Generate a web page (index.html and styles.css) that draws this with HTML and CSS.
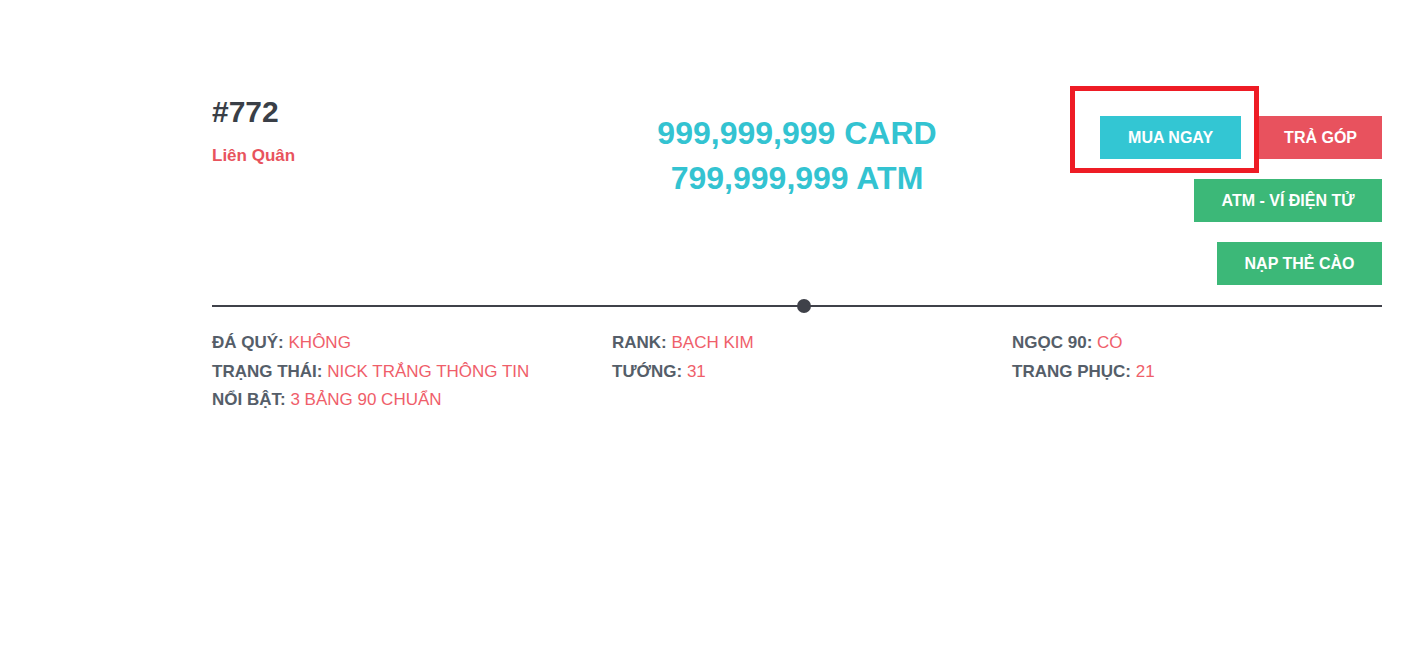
FILE: index.html
```html
<!DOCTYPE html>
<html lang="vi">
<head>
<meta charset="utf-8">
<title>#772 Liên Quân</title>
<link rel="stylesheet" href="styles.css">
</head>
<body>
<main class="page">
  <section class="head">
    <div class="head-left">
      <h1 class="acc-id">#772</h1>
      <div class="acc-game">Liên Quân</div>
    </div>
    <div class="head-center">
      <div class="price">999,999,999 CARD</div>
      <div class="price">799,999,999 ATM</div>
    </div>
    <div class="head-right">
      <div class="btn-row">
        <span class="btn-wrap">
          <a class="btn btn-cyan">MUA NGAY</a>
          <span class="highlight"></span>
        </span>
        <a class="btn btn-red">TRẢ GÓP</a>
      </div>
      <div class="btn-row">
        <a class="btn btn-green">ATM - VÍ ĐIỆN TỬ</a>
      </div>
      <div class="btn-row">
        <a class="btn btn-green">NẠP THẺ CÀO</a>
      </div>
    </div>
  </section>
  <div class="divider"><span class="dot"></span></div>
  <section class="info">
    <div class="info-col">
      <div class="info-item"><b>ĐÁ QUÝ:</b> <span>KHÔNG</span></div>
      <div class="info-item"><b>TRẠNG THÁI:</b> <span>NICK TRẮNG THÔNG TIN</span></div>
      <div class="info-item"><b>NỔI BẬT:</b> <span>3 BẢNG 90 CHUẨN</span></div>
    </div>
    <div class="info-col">
      <div class="info-item"><b>RANK:</b> <span>BẠCH KIM</span></div>
      <div class="info-item"><b>TƯỚNG:</b> <span>31</span></div>
    </div>
    <div class="info-col">
      <div class="info-item"><b>NGỌC 90:</b> <span>CÓ</span></div>
      <div class="info-item"><b>TRANG PHỤC:</b> <span>21</span></div>
    </div>
  </section>
</main>
</body>
</html>
```
FILE: styles.css
```css
html, body {
  margin: 0;
  padding: 0;
  background: #ffffff;
}
body {
  font-family: "Liberation Sans", Arial, sans-serif;
  color: #3a3f47;
}
.page {
  width: 1170px;
  margin-left: 212px;
  padding-top: 95px;
}
.head {
  display: grid;
  grid-template-columns: 1fr 1fr 1fr;
  align-items: start;
}
.head-left {
  display: flex;
  flex-direction: column;
}
.acc-id {
  margin: 0;
  font-size: 30px;
  font-weight: 700;
  line-height: 34.5px;
  color: #3a3f47;
}
.acc-game {
  margin-top: 16px;
  font-size: 17px;
  font-weight: 700;
  color: #e8535d;
}
.head-center {
  padding-top: 16px;
  text-align: center;
}
.price {
  font-size: 32px;
  font-weight: 700;
  line-height: 45px;
  color: #33c3d1;
}
.head-right {
  padding-top: 21px;
  display: flex;
  flex-direction: column;
  align-items: flex-end;
  gap: 20px;
}
.btn-row {
  display: flex;
  gap: 18px;
  justify-content: flex-end;
}
.btn-wrap {
  position: relative;
  display: flex;
}
.btn {
  display: block;
  height: 43px;
  line-height: 44px;
  padding: 0 27.5px;
  font-size: 16px;
  font-weight: 700;
  color: #ffffff;
  text-decoration: none;
  white-space: nowrap;
}
.btn-cyan { background: #33c6d3; padding: 0 28px; }
.btn-red { background: #e8525e; padding: 0 25px; }
.btn-green { background: #3cb878; }
.highlight {
  position: absolute;
  left: -30px;
  top: -30px;
  right: -18px;
  bottom: -14px;
  border: 5px solid #ee1c25;
  pointer-events: none;
}
.divider {
  position: relative;
  margin-top: 20px;
  height: 2px;
  background: #3f4149;
}
.dot {
  position: absolute;
  left: 585px;
  top: -6px;
  width: 14px;
  height: 14px;
  border-radius: 50%;
  background: #3f4149;
}
.info {
  margin-top: 22px;
  display: grid;
  grid-template-columns: 400px 400px 370px;
}
.info-item {
  font-size: 17px;
  line-height: 28.5px;
  color: #555e69;
  white-space: nowrap;
}
.info-item b {
  font-weight: 700;
}
.info-item span {
  color: #ef5e6a;
}
```
